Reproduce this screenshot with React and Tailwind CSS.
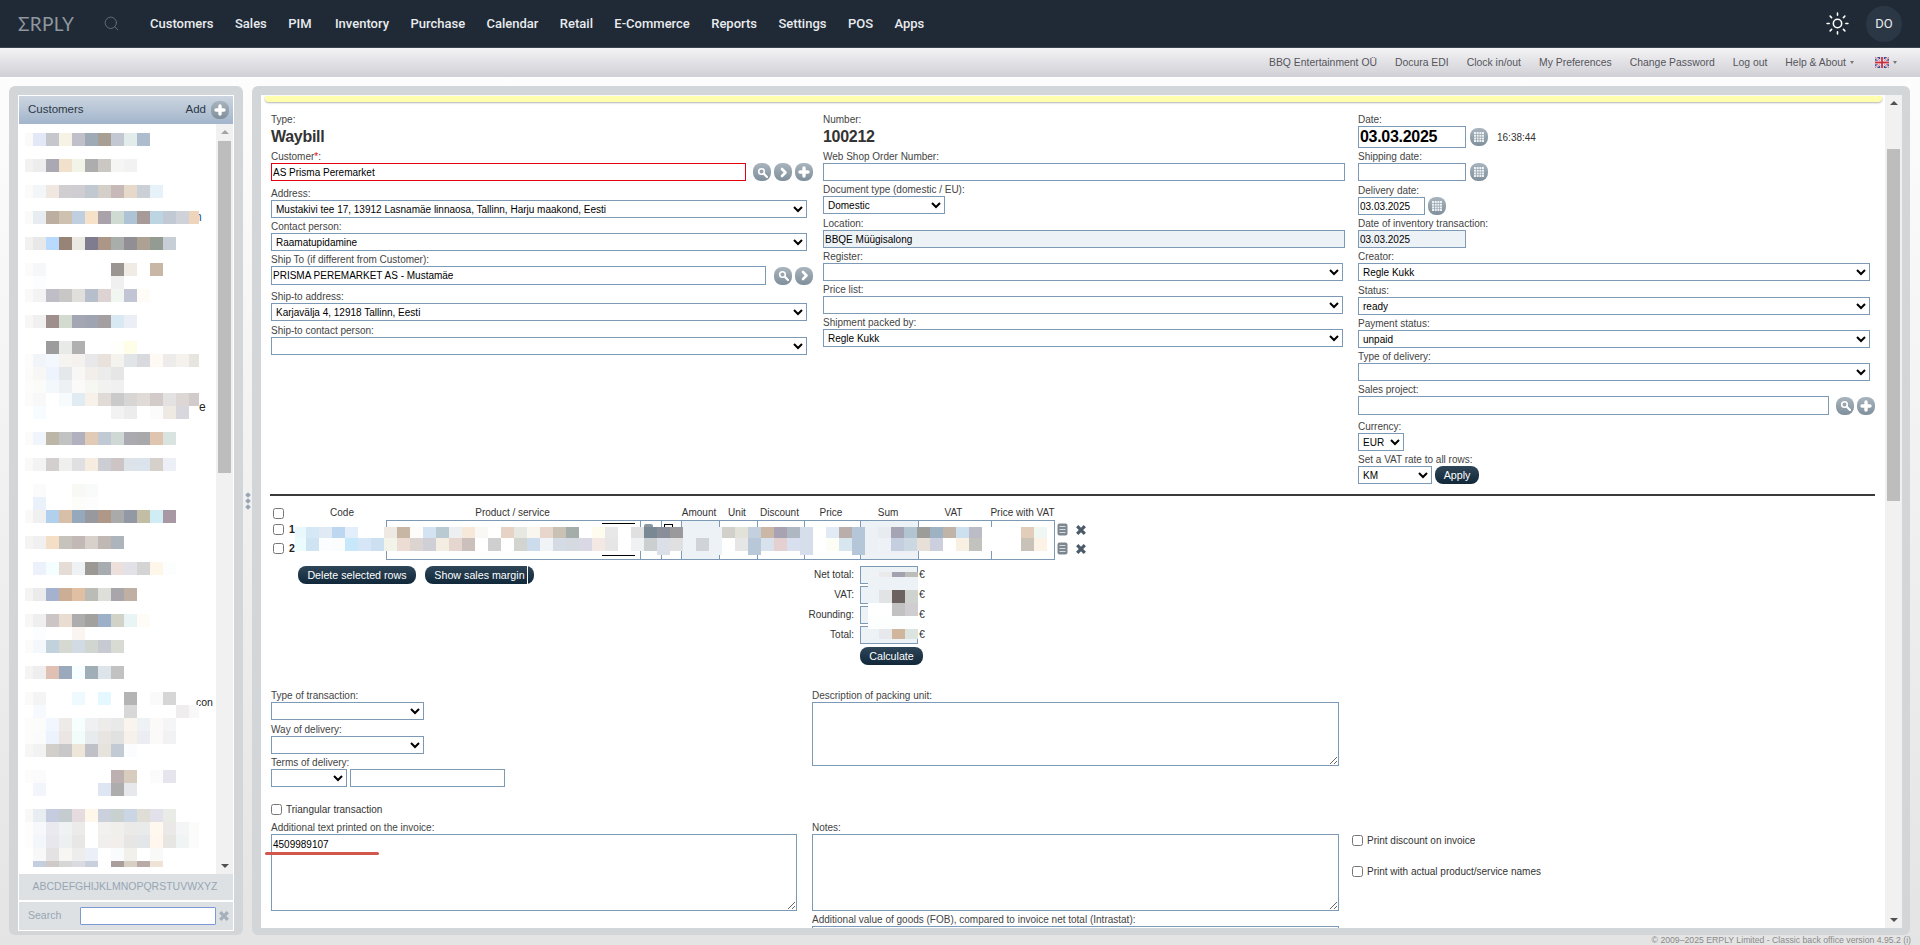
import React from "react";
import { Search, Sun } from "lucide-react";

const navItems = ["Customers", "Sales", "PIM", "Inventory", "Purchase", "Calendar", "Retail", "E-Commerce", "Reports", "Settings", "POS", "Apps"];
const subLinks = ["BBQ Entertainment OÜ", "Docura EDI", "Clock in/out", "My Preferences", "Change Password", "Log out"];

// blurred customer names, one entry per 13px line of the list
const listRows = {
  0: "fafafa e2e8f5 c6c6cd f6f2e4 c0c0cb 9eabb6 a79e94 c3c7d2 e2ecea adbdce",
  2: "f2f2f2 ededed a9a8b3 f1e0cc f2f4e8 adadad cbc7c2 f5f6f4 f1f2f1",
  4: "fbfbfb f2f6f8 f0e7e0 d0ced0 cfcdd1 c2c8d0 d5cfca c6b9b8 e6d9ca cbcfd6 e7f1fa",
  6: "fafafa e7ecf0 bcafa2 cec1b0 bfcfdf f6e2c8 a9a2aa cfdad3 aec4d4 a79a99 bdd4e3 c1c9d4 d0d2d9 eed4bb",
  8: "f1f1f1 e8e8e8 b9daff 988476 ece8e2 7e7c8e ab9687 a9aeab 918f94 ada193 949b93 c7ced6",
  10: "fbfbfb f6f7f9 - - - - - 9b9591 f0ebe5 - c9b7a5",
  11: "- fcfdfe - - - - - f0f0f0",
  12: "f9f9f9 f3f3f3 bfbdc5 c9c6c6 e0dfdb b7bfcc dcd3d2 f1f6f0 c2c5d3 fffcf8",
  14: "f7f7f7 f0f0f0 9e8f8c d3dbd0 a5a6b3 9fa4b2 a4a0a2 d9e9f4 ebeff5",
  16: "- - 9c9c9c e8eae7 b0b0b0 - - fefefb fefee8",
  17: "fcfcfc f1f5fa f3f8fe f6f4f0 f4f1ee e8e7e9 e9e2dc f5f3ee e1e5e7 d9dade fef9f3 edecea f5f2ee e8e5e0",
  18: "fbfbfb f8f7f6 edf4fd e4e8eb f9f7f5 f2efea ececec e6e6e6",
  19: "fcfcfc fbfbfa f3f8fd edf1f4 fbfaf8 f6f6f2 f2f2f1 f0f0f0",
  20: "fbfbfb f8f8f8 - f6fbfe e1ecf2 f8f1ea e0dbd6 cbcacb d7d6d5 e1dbd7 d2cbca e3e1e2 dcd7d4 d1cccb",
  21: "- f6fcff - - - - - f2f2f2 ececec - fbfbfb eee9e3 d8d7dd",
  23: "fbfbfb eff5fa bcb6a9 c0c3c1 b1b0bf e2cbb6 c0c9d4 cfd8d5 aaaab0 a9a9ac dfc5b0 d9e3e0",
  25: "f9f9f9 f3f3f3 d3cfce eff0ee e0e0e3 f6ecdf cdced3 cdc4c6 dce4e9 dbe3ec d5d1ca ecf0f6",
  27: "- fbfbfb - - f8f8f5 f9fbfa",
  28: "- eaf1fb - - fcfcf9 fcfdfc",
  29: "f9f9f9 f0f0f0 b0d0ee d8c0a8 96a8bc 98989f b09888 aaaaaa 9298a4 c2bea6 d0ecf4 a898a4",
  31: "f4f4f4 f0f0f0 f4dfc6 c6c2bc c2b8b6 d8d0ca c0b8b2 aeb4bc",
  33: "- edf1fb f5feff e6dcd6 eef2f5 9c9894 a6acb0 ecdfdc e2e1e8 d4d4d4 fff6ea fcfefe",
  35: "f4f4f4 ebebeb a4b2d0 ccae96 e0bfa2 bcbcb6 dedfd8 a8a6aa c0b0a4",
  37: "f7f7f7 eeefee cbc5c5 e9ddd2 adadad a3a19e 9cb1c9 d2d3c8 e9f4f5 fffbf6",
  38: "- fbfdfe - - fbf5f1",
  39: "fbfbfb f4f7fb c2d2dc d6d8d2 d2dae4 d2d6d0 c8cad2 d8dad4",
  41: "f4f4f4 eeeeee dfc0b2 9aaabc f6feff a0aeb8 dde4ea c2c2c2",
  43: "fafafa f4f4f4 - - eefaff - e6f8ff - b4b4b4 - fafafa d6d6d6",
  44: "- f6f9fe - - - - - - d8d8d8 - - - efeded f8f8f8",
  45: "fcfcfc fcfcfb f2f6fe eeeae8 f6fffe eef0f2 eeecea e9e9e9 f9f5ee eff2f5 fbfaf8 f5f5f7",
  46: "fcfcfc fbfbfb ecf3fc ebe5e3 f2fdfb e8ebed e8e4e1 e1e1e1 f6f2eb ebedf2 fbfaf8 f2f2f5",
  47: "f6f6f6 f2f2f2 d2cfcb c8c8c8 eee6d8 c0c0c8 e6e3dc c2cad4 fbfcfd",
  49: "fcfcfc fbfbfb - - - - - bcb0b0 d8ccbe - fbfbfb e6e4ec",
  50: "- f2f5fc - - - - dde6f2 adadad e6e8ec",
  52: "f8f8f8 e8edf2 c6cce0 c4ccd0 e6dcdf fff7ea cad0dc c8d0d0 cbd6e4 e0dcd6 e2e0ea e8ebe6",
  53: "fdfdfd f6f8fb ebe9f0 eff2f2 ecebe9 - f3f1ef f1efec ebeae8 e9ebeb fff8ef ebe9e7 f3f5f7 fbfbfa",
  54: "fdfdfd f3f7fb e8e7ee ecf0f1 e8e7e5 - f1efee f1eeec e7e6e5 e4e7e9 fff7ee e7e6e3 f1f4f5 fafbfa",
  55: "- f8f8f8 e4e2e3 f7f6f2 eeedee ebeff7 - fafbfd f2f0ea - f9f9f7",
  56: "- c4cede cfc9c8 d6d6d6 d9dbe0 c9cfdc - a99e9b d8cfc4 b9aaa8 eee3d4",
};
const listTails = {
  6: <div className="-ml-[4px] text-[#1d4fa0]">n</div>,
  21: <div className="relative -top-[5px] text-[#222]">e</div>,
  43: <div className="relative top-[4px] -ml-[3px] text-[10.5px] text-[#222]">con</div>,
};

const tableMosaic = [
  "e8f8fb d5e8f6 e0eaf5 bcd7ef e2eefa - - eee9e3 c6b6a3 fdfcfb d4e3f2 b9cad3 eeeff1 f6e9da faf8f4 fff e6d3c6 e8e8e2 f9f5ef e8d5cb c9c1b4 a5adab fff fdfcef e8e8e8 fff e0e0e0 7a8893 8a8e98 9a9a9c edf2f7 edf2f7 edf2f7 d2d0cb e2e2d8 c4d0de cbb7a5 a7a3b2 aeb8c2 d5deea fff e2ebf5 b9aeaa b4c6d8 edf1f6 e8ebf0 a5a4b5 b2c3d2 9c9c98 9fb2c4 c0b4a8 cce0f0 bcbcc6 fff fff fff e2ccba f0f6f2",
  "eafcfd cfe4f3 fcfdff fbfcfc c6e8fa d6e6f6 cce0f2 f2f4ea ecdcd4 dcd4d0 cfcfd6 f4eee2 e6d6d0 ccc0bc fff cfcfcf fff d2d4d0 cddcec f1f4f6 d4dbe4 d4dae0 dad8e4 f4e8e4 e6e6e6 fff f0f1f3 cccfd0 dbe0e8 e0e0e0 edf2f7 d0d4d8 edf2f7 fff e6e6e6 b8c8d8 d8e2ec e4d0d0 d8dfee d5deea fff fcfdf5 d8e6f0 b4c6d8 edf1f6 eef1f5 c4cede cbd8e2 e8e0d8 ccd0de fff f8f0e2 c2c2be fff fff fff c8c2b8 fcf2e6",
];
const tableMosaicTail = "- - - - - - - - - - - - - - - - - - - - - - - - - - - - dbe0e8 - edf2f7 edf2f7 edf2f7 - - b8c8d8 - - - d5deea - - - b4c6d8 edf1f6 edf1f6 edf1f6 edf1f6";

const totalsMosaic = [
  { h: "h-[5px]", cells: "f0f2f5 eaeaea a4a2ae bcbcb8" },
  { h: "h-[13px]", cells: "edf2f7 edf2f7 edf2f7 edf2f7" },
  { h: "h-[13px]", cells: "edf2f7 e2e3e5 6c6360 ced3d0" },
  { h: "h-[13px]", cells: "fff fff c2c2c2 cfcdd0" },
  { h: "h-[13px]", cells: "fdfefe fdfefe fdfefe fdfefe" },
  { h: "h-[10px]", cells: "edf2f7 e6e8ec cfb69c dce4e0" },
];

const MosaicCells = ({ cells, first }) => (
  <>
    {cells.split(" ").map((c, i) => (
      <div
        key={i}
        className={`relative z-10 h-full flex-none ${i === 0 ? first : "w-[13px]"}`}
        style={c === "-" ? undefined : { backgroundColor: `#${c}` }}
      />
    ))}
  </>
);

const inputClass = "border border-[#7c99b5] bg-white px-px text-[10px] text-black outline-none";
const selectClass = "border border-[#7c99b5] bg-white text-[10px] text-black outline-none";
const checkClass = "block h-[11px] w-[11px] flex-none";

const Field = ({ label, className, children }) => (
  <div className={className}>
    <div className="h-[13px] text-[10px] leading-[13px] text-[#444]">{label}</div>
    {children}
  </div>
);

const Select = ({ value, className }) => (
  <select defaultValue={value || ""} className={`${selectClass} ${className}`}>
    <option value={value || ""}>{value || ""}</option>
  </select>
);

const RoundBtn = ({ children, className }) => (
  <div className={`flex h-[18px] w-[18px] flex-none items-center justify-center rounded-[8px] bg-linear-to-b from-[#a9b5be] to-[#7f8f9b] ${className || ""}`}>
    {children}
  </div>
);

const SearchGlyph = () => (
  <svg width="11" height="11" viewBox="0 0 11 11" fill="none" stroke="#fff">
    <circle cx="4.5" cy="4.5" r="2.8" strokeWidth="1.6" />
    <path d="M6.8 6.8 L10 10" strokeWidth="2.2" strokeLinecap="round" />
  </svg>
);
const NextGlyph = () => (
  <svg width="9" height="11" viewBox="0 0 9 11" fill="none" stroke="#fff" strokeWidth="2.6" strokeLinecap="round" strokeLinejoin="round">
    <path d="M3 2 L6.5 5.5 L3 9" />
  </svg>
);
const PlusGlyph = () => (
  <svg width="12" height="12" viewBox="0 0 12 12" fill="none" stroke="#fff" strokeWidth="3.4" strokeLinecap="round">
    <path d="M6 2 V10 M2 6 H10" />
  </svg>
);
const CalendarGlyph = () => (
  <svg width="10" height="10" viewBox="0 0 10 10" fill="#eef1f4">
    <path d="M0 0h2v2H0zM2.7 0h2v2h-2zM5.4 0h2v2h-2zM8 0h2v2H8zM0 2.7h2v2H0zM2.7 2.7h2v2h-2zM5.4 2.7h2v2h-2zM8 2.7h2v2H8zM0 5.4h2v2H0zM2.7 5.4h2v2h-2zM5.4 5.4h2v2h-2zM8 5.4h2v2H8zM0 8h2v2H0zM2.7 8h2v2h-2zM5.4 8h2v2h-2zM8 8h2v2H8z" />
  </svg>
);
const CrossGlyph = ({ color, className }) => (
  <svg width="10" height="10" viewBox="0 0 10 10" fill="none" stroke={color} strokeWidth="3.2" className={className}>
    <path d="M1.2 1.2 L8.8 8.8 M8.8 1.2 L1.2 8.8" />
  </svg>
);

const DarkBtn = ({ children, className }) => (
  <button type="button" className={`relative flex h-[18px] flex-none items-center justify-center rounded-[8px] bg-linear-to-b from-[#2f4659] to-[#10283a] text-[10.7px] leading-none text-white ${className}`}>
    {children}
  </button>
);

const Scrollbar = ({ thumbClass, upClass }) => (
  <div className="flex w-[17px] flex-none flex-col items-center bg-[#f1f1f1]">
    <div className={`mt-[6px] h-0 w-0 border-x-[4px] border-b-[4px] border-x-transparent ${upClass}`} />
    <div className={`w-[13px] bg-[#bdbdbd] ${thumbClass}`} />
    <div className="flex-1" />
    <div className="mb-[6px] h-0 w-0 border-x-[4px] border-t-[4px] border-x-transparent border-t-[#505050]" />
  </div>
);

const NavBar = () => (
  <div className="flex h-[48px] flex-none items-center border-b border-[#39444f] bg-[#1f2a36] pl-[18px] pr-[18px]">
    <div className="w-[54px] font-['Lato',sans-serif] text-[19px] font-normal leading-none tracking-[0.3px] text-[#8f979f]">ΣRPLY</div>
    <Search className="ml-[31px] text-[#68727b]" size={17} strokeWidth={1.25} />
    <div className="ml-[30px] flex gap-[21.4px] font-['Roboto',sans-serif] text-[13px] font-medium text-[#e8ebee]">
      {navItems.map((item) => (
        <span key={item} className={item === "PIM" ? "mr-[2px]" : ""}>{item}</span>
      ))}
    </div>
    <Sun className="ml-auto text-white" size={25} strokeWidth={1.5} />
    <div className="ml-[16px] flex h-[36px] w-[36px] items-center justify-center rounded-full bg-[#2b3744] font-['Roboto',sans-serif] text-[13px] text-[#e8ebee]">DO</div>
  </div>
);

const SubBar = () => (
  <div className="flex h-[30px] flex-none items-center justify-end gap-[18px] border-b border-white bg-linear-to-b from-[#f4f4f6] to-[#cfcfd5] pr-[23px] text-[10.4px] text-[#55555b]">
    {subLinks.map((l) => (
      <span key={l}>{l}</span>
    ))}
    <span className="flex items-center gap-[4px]">
      Help &amp; About
      <span className="h-0 w-0 border-x-[2px] border-t-[3px] border-x-transparent border-t-[#777]" />
    </span>
    <span className="ml-[3px] flex items-center gap-[4px]">
      <svg width="14" height="11" viewBox="0 0 14 11">
        <rect width="14" height="11" fill="#3b4f95" />
        <path d="M0 0 L14 11 M14 0 L0 11" stroke="#fff" strokeWidth="2" />
        <path d="M0 0 L14 11 M14 0 L0 11" stroke="#c8303f" strokeWidth="0.7" />
        <path d="M7 0 V11 M0 5.5 H14" stroke="#fff" strokeWidth="3.4" />
        <path d="M7 0 V11 M0 5.5 H14" stroke="#c8303f" strokeWidth="1.8" />
      </svg>
      <span className="h-0 w-0 border-x-[2px] border-t-[3px] border-x-transparent border-t-[#777]" />
    </span>
  </div>
);

const CustomerPanel = () => (
  <div className="flex w-[234px] flex-none flex-col rounded-[6px] bg-[#d3d6d9] px-[9px] pb-[4px] pt-[9px]">
    <div className="flex min-h-0 flex-1 flex-col border border-white bg-white">
      <div className="flex h-[28px] flex-none items-center bg-linear-to-b from-[#ccd5df] to-[#a2b5cc] pl-[9px] pr-[4px] text-[11.5px] text-[#2b3846]">
        <span>Customers</span>
        <span className="ml-auto">Add</span>
        <RoundBtn className="ml-[5px]">
          <PlusGlyph />
        </RoundBtn>
      </div>
      <div className="flex min-h-0 flex-1">
        <div className="min-w-0 flex-1 overflow-hidden pl-[6px] pt-[9px]">
          {Array.from({ length: 57 }, (_, k) => (
            <div key={k} className={`flex items-center ${k === 56 ? "h-[6px]" : "h-[13px]"}`}>
              <div className="flex h-full w-[174px] flex-none overflow-hidden">
                {listRows[k] && <MosaicCells cells={listRows[k]} first="w-[8px]" />}
              </div>
              {listTails[k] && <div className="text-[12px] leading-[13px]">{listTails[k]}</div>}
            </div>
          ))}
        </div>
        <Scrollbar thumbClass="mt-[7px] h-[332px]" upClass="border-b-[#a3a3a3]" />
      </div>
      <div className="flex h-[27px] flex-none items-center justify-center border-b border-white bg-[#dde1e4] pr-[2px] text-[10.5px] text-[#98a5b3]">
        ABCDEFGHIJKLMNOPQRSTUVWXYZ
      </div>
      <div className="mt-px flex h-[28px] flex-none items-center bg-[#dde1e4] pl-[9px] text-[10.5px] text-[#98a5b3]">
        <span className="w-[52px]">Search</span>
        <input className="h-[18px] w-[136px] rounded-[1px] border border-[#7c9ad4] bg-white outline-none" />
        <CrossGlyph color="#a5b0ba" className="ml-[3px]" />
      </div>
    </div>
  </div>
);

const FormHead = () => (
  <div className="flex pl-[10px] pt-[11px]">
    <div className="w-[552px] flex-none">
      <Field label="Type:">
        <div className="h-[22px] text-[16px] font-bold leading-[22px] tracking-[-0.3px] text-[#333]">Waybill</div>
      </Field>
      <Field label={<>Customer<span className="text-[#e00]">*</span>:</>} className="mt-[2px]">
        <div className="flex items-center">
          <input defaultValue="AS Prisma Peremarket" className="h-[18px] w-[475px] border border-[#e80010] bg-white px-px text-[10px] text-black outline-none" />
          <RoundBtn className="ml-[7px]"><SearchGlyph /></RoundBtn>
          <RoundBtn className="ml-[3px]"><NextGlyph /></RoundBtn>
          <RoundBtn className="ml-[3px]"><PlusGlyph /></RoundBtn>
        </div>
      </Field>
      <Field label="Address:" className="mt-[6px]">
        <Select value="Mustakivi tee 17, 13912 Lasnamäe linnaosa, Tallinn, Harju maakond, Eesti" className="block h-[18px] w-[536px]" />
      </Field>
      <Field label="Contact person:" className="mt-[2px]">
        <Select value="Raamatupidamine" className="block h-[18px] w-[536px]" />
      </Field>
      <Field label="Ship To (if different from Customer):" className="mt-[2px]">
        <div className="flex items-center">
          <input defaultValue="PRISMA PEREMARKET AS - Mustamäe" className={`${inputClass} h-[19px] w-[495px]`} />
          <RoundBtn className="ml-[8px]"><SearchGlyph /></RoundBtn>
          <RoundBtn className="ml-[3px]"><NextGlyph /></RoundBtn>
        </div>
      </Field>
      <Field label="Ship-to address:" className="mt-[5px]">
        <Select value="Karjavälja 4, 12918 Tallinn, Eesti" className="block h-[18px] w-[536px]" />
      </Field>
      <Field label="Ship-to contact person:" className="mt-[3px]">
        <Select className="block h-[18px] w-[536px]" />
      </Field>
    </div>

    <div className="w-[535px] flex-none">
      <Field label="Number:">
        <div className="h-[22px] text-[16px] font-bold leading-[22px] tracking-[-0.3px] text-[#333]">100212</div>
      </Field>
      <Field label="Web Shop Order Number:" className="mt-[2px]">
        <input className={`${inputClass} block h-[18px] w-[522px]`} />
      </Field>
      <Field label="Document type (domestic / EU):" className="mt-[2px]">
        <Select value="Domestic" className="block h-[18px] w-[122px]" />
      </Field>
      <Field label="Location:" className="mt-[3px]">
        <input defaultValue="BBQE Müügisalong" className="block h-[18px] w-[522px] border border-[#7c99b5] bg-[#edf2f6] px-px text-[10px] text-black outline-none" />
      </Field>
      <Field label="Register:" className="mt-[2px]">
        <Select className="block h-[18px] w-[520px]" />
      </Field>
      <Field label="Price list:" className="mt-[2px]">
        <Select className="block h-[18px] w-[520px]" />
      </Field>
      <Field label="Shipment packed by:" className="mt-[2px]">
        <Select value="Regle Kukk" className="block h-[18px] w-[520px]" />
      </Field>
    </div>

    <div className="min-w-0 flex-1">
      <Field label="Date:">
        <div className="flex items-center">
          <input defaultValue="03.03.2025" className="h-[22px] w-[108px] border border-[#7c99b5] bg-white px-px text-[16px] font-bold tracking-[-0.3px] text-black outline-none" />
          <RoundBtn className="ml-[4px]"><CalendarGlyph /></RoundBtn>
          <span className="ml-[9px] text-[10px] text-[#333]">16:38:44</span>
        </div>
      </Field>
      <Field label="Shipping date:" className="mt-[2px]">
        <div className="flex items-center">
          <input className={`${inputClass} h-[18px] w-[108px]`} />
          <RoundBtn className="ml-[4px]"><CalendarGlyph /></RoundBtn>
        </div>
      </Field>
      <Field label="Delivery date:" className="mt-[3px]">
        <div className="flex items-center">
          <input defaultValue="03.03.2025" className={`${inputClass} h-[18px] w-[67px]`} />
          <RoundBtn className="ml-[3px]"><CalendarGlyph /></RoundBtn>
        </div>
      </Field>
      <Field label="Date of inventory transaction:" className="mt-[2px]">
        <input defaultValue="03.03.2025" className="block h-[18px] w-[108px] border border-[#7c99b5] bg-[#edf2f6] px-px text-[10px] text-black outline-none" />
      </Field>
      <Field label="Creator:" className="mt-[2px]">
        <Select value="Regle Kukk" className="block h-[18px] w-[512px]" />
      </Field>
      <Field label="Status:" className="mt-[3px]">
        <Select value="ready" className="block h-[18px] w-[512px]" />
      </Field>
      <Field label="Payment status:" className="mt-[2px]">
        <Select value="unpaid" className="block h-[18px] w-[512px]" />
      </Field>
      <Field label="Type of delivery:" className="mt-[2px]">
        <Select className="block h-[18px] w-[512px]" />
      </Field>
      <Field label="Sales project:" className="mt-[2px]">
        <div className="flex items-center">
          <input className={`${inputClass} h-[19px] w-[471px]`} />
          <RoundBtn className="ml-[7px]"><SearchGlyph /></RoundBtn>
          <RoundBtn className="ml-[3px]"><PlusGlyph /></RoundBtn>
        </div>
      </Field>
      <Field label="Currency:" className="mt-[5px]">
        <Select value="EUR" className="block h-[18px] w-[46px]" />
      </Field>
      <Field label="Set a VAT rate to all rows:" className="mt-[2px]">
        <div className="flex items-center">
          <Select value="KM" className="h-[18px] w-[74px]" />
          <DarkBtn className="ml-[3px] w-[44px]">Apply</DarkBtn>
        </div>
      </Field>
    </div>
  </div>
);

const colTemplate = "grid grid-cols-[253px_21px_20px_38px_38px_47px_56px_58px_73px_65px]";

const RowCells = () => (
  <div className={`${colTemplate} h-[19px]`}>
    {[0, 1, 2, 3, 4, 5, 6, 7, 8, 9].map((i) => (
      <div key={i} className={`${i > 0 ? "border-l border-[#7c99b5]" : ""} ${i === 3 || i === 7 ? "bg-[#edf2f7]" : ""}`} />
    ))}
  </div>
);

const ProductTable = () => (
  <div className="relative mt-[10px] text-[10px] text-[#333]">
    <div className="flex h-[14px] items-center text-center leading-[14px]">
      <div className="w-[27px] pl-[2px] text-left"><input type="checkbox" className={checkClass} /></div>
      <div className="w-[88px]">Code</div>
      <div className={`${colTemplate} w-[669px]`}>
        <span>Product / service</span>
        <span />
        <span />
        <span>Amount</span>
        <span>Unit</span>
        <span>Discount</span>
        <span>Price</span>
        <span>Sum</span>
        <span>VAT</span>
        <span className="whitespace-nowrap">Price with VAT</span>
      </div>
    </div>
    <div className="relative flex">
      <div className="w-[115px] flex-none">
        <div className="flex h-[19px] items-center pl-[2px] text-[10.5px] font-bold text-[#222]">
          <input type="checkbox" className={checkClass} />
          <span className="ml-[5px]">1</span>
        </div>
        <div className="flex h-[19px] items-center pl-[2px] text-[10.5px] font-bold text-[#222]">
          <input type="checkbox" className={checkClass} />
          <span className="ml-[5px]">2</span>
        </div>
      </div>
      <div className="relative h-[40px] w-[669px] flex-none border border-[#7c99b5]">
        <RowCells />
        <RowCells />
        <div className="absolute left-[215px] top-[2px] h-[33px] w-[33px] border-y border-black" />
        <div className="absolute left-[257px] top-[3px] h-[5px] w-[9px] rounded-t-[2px] bg-[#8a96a0]" />
        <div className="absolute left-[277px] top-[3px] h-[5px] w-[9px] border-x border-t border-black" />
      </div>
      <div className="ml-[2px]">
        {[0, 1].map((i) => (
          <div key={i} className="flex h-[19px] items-center">
            <svg width="11" height="13" viewBox="0 0 11 13">
              <rect x="0.5" y="0.5" width="10" height="12" rx="2" fill="#7c8790" />
              <path d="M2.5 3.5 H8.5 M2.5 6.5 H8.5 M2.5 9.5 H8.5" stroke="#d7dce0" strokeWidth="1.1" />
            </svg>
            <CrossGlyph color="#4b5b69" className="ml-[8px]" />
          </div>
        ))}
      </div>
      <div className="absolute left-[24px] top-[7px]">
        {tableMosaic.map((cells, i) => (
          <div key={i} className={`flex ${i === 0 ? "h-[11px]" : "h-[13px]"}`}>
            <MosaicCells cells={cells} first="w-[11px]" />
          </div>
        ))}
        <div className="flex h-[4px]">
          <MosaicCells cells={tableMosaicTail} first="w-[11px]" />
        </div>
      </div>
    </div>
  </div>
);

const Totals = () => (
  <div className="ml-[27px] mt-[6px] flex text-[10px] text-[#333]">
    <div className="flex w-[493px] flex-none gap-[9px]">
      <DarkBtn className="w-[118px]">Delete selected rows</DarkBtn>
      <DarkBtn className="w-[109px]">
        Show sales margin
        <span className="absolute inset-y-0 right-[6px] w-px bg-white" />
      </DarkBtn>
    </div>
    <div className="w-[63px] flex-none text-right">
      {["Net total:", "VAT:", "Rounding:", "Total:"].map((l) => (
        <div key={l} className="mb-[2px] h-[18px] text-[10px] leading-[18px]">{l}</div>
      ))}
    </div>
    <div className="relative ml-[6px] flex-none">
      {[0, 1, 2, 3].map((i) => (
        <div key={i} className="mb-[2px] flex h-[18px] items-center">
          <div className="h-[18px] w-[58px] border border-[#7c99b5] bg-[#edf2f7]" />
          <span className="ml-[1px] text-[10.5px]">€</span>
        </div>
      ))}
      <DarkBtn className="mt-[3px] w-[63px]">Calculate</DarkBtn>
      <div className="absolute left-[8px] top-[6px]">
        {totalsMosaic.map((row, i) => (
          <div key={i} className={`flex ${row.h}`}>
            <MosaicCells cells={row.cells} first="w-[11px]" />
          </div>
        ))}
      </div>
    </div>
  </div>
);

const BottomForm = () => (
  <div className="mt-[24px] pl-[10px]">
    <div className="flex">
      <div className="w-[541px] flex-none">
        <Field label="Type of transaction:">
          <Select className="block h-[18px] w-[153px]" />
        </Field>
        <Field label="Way of delivery:" className="mt-[3px]">
          <Select className="block h-[18px] w-[153px]" />
        </Field>
        <Field label="Terms of delivery:" className="mt-[2px]">
          <div className="flex gap-[3px]">
            <Select className="h-[18px] w-[76px]" />
            <input className={`${inputClass} h-[18px] w-[155px]`} />
          </div>
        </Field>
      </div>
      <Field label="Description of packing unit:">
        <textarea className="block h-[64px] w-[527px] border border-[#7c99b5] bg-white outline-none" />
      </Field>
    </div>
    <label className="mt-[16px] flex h-[13px] items-center text-[10px] text-[#333]">
      <input type="checkbox" className={`${checkClass} mr-[4px]`} />
      Triangular transaction
    </label>
    <div className="mt-[5px] flex">
      <Field label="Additional text printed on the invoice:" className="w-[541px] flex-none">
        <div className="relative">
          <textarea defaultValue="4509989107" className="block h-[77px] w-[526px] border border-[#7c99b5] bg-white px-px pt-[4px] text-[10px] leading-[12px] text-black outline-none" />
          <div className="absolute left-[-6px] top-[18px] h-[3px] w-[114px] rounded-full bg-[#d1574c]" />
        </div>
      </Field>
      <div className="w-[540px] flex-none">
        <Field label="Notes:">
          <textarea className="block h-[77px] w-[527px] border border-[#7c99b5] bg-white outline-none" />
        </Field>
        <Field label="Additional value of goods (FOB), compared to invoice net total (Intrastat):" className="mt-[2px]">
          <input className={`${inputClass} block h-[18px] w-[527px]`} />
        </Field>
      </div>
      <div className="pt-[13px] text-[10px] text-[#333]">
        <label className="flex h-[13px] items-center">
          <input type="checkbox" className={`${checkClass} mr-[4px]`} />
          Print discount on invoice
        </label>
        <label className="mt-[18px] flex h-[13px] items-center">
          <input type="checkbox" className={`${checkClass} mr-[4px]`} />
          Print with actual product/service names
        </label>
      </div>
    </div>
  </div>
);

const MainPanel = () => (
  <div className="flex min-w-0 flex-1 flex-col rounded-[6px] bg-[#d3d6d9] pb-[7px] pl-[9px] pr-[8px] pt-[9px]">
    <div className="flex min-h-0 flex-1 bg-white">
      <div className="min-w-0 flex-1 overflow-hidden">
        <div className="ml-[4px] mr-[3px] mt-px h-[6px] rounded-b-[4px] bg-[#ffffae] shadow-[0_1px_2px_rgba(0,0,0,0.3)]" />
        <FormHead />
        <div className="ml-[9px] mr-[10px] mt-[10px] h-[2px] bg-[#3a3a3a]" />
        <div className="pl-[10px]">
          <ProductTable />
          <Totals />
        </div>
        <BottomForm />
      </div>
      <Scrollbar thumbClass="mt-[44px] h-[352px]" upClass="border-b-[#505050]" />
    </div>
  </div>
);

export default function App() {
  return (
    <div className="flex h-[945px] w-full flex-col overflow-hidden bg-linear-to-b from-white to-[#e4e4e4] font-['Liberation_Sans',Arial,sans-serif]">
      <NavBar />
      <SubBar />
      <div className="flex min-h-0 flex-1 pl-[9px] pr-[10px] pt-[8px]">
        <CustomerPanel />
        <div className="flex w-[9px] flex-none flex-col items-center justify-center gap-[2px] pb-[20px]">
          <div className="h-[4px] w-[4px] rotate-45 bg-[#98a5b3]" />
          <div className="h-[4px] w-[4px] rotate-45 bg-[#98a5b3]" />
          <div className="h-[4px] w-[4px] rotate-45 bg-[#98a5b3]" />
        </div>
        <MainPanel />
      </div>
      <div className="h-[10px] flex-none pr-[9px] text-right text-[8.7px] leading-[10px] text-[#8a8a8a]">
        © 2009–2025 ERPLY Limited - Classic back office version 4.95.2 (i)
      </div>
    </div>
  );
}
